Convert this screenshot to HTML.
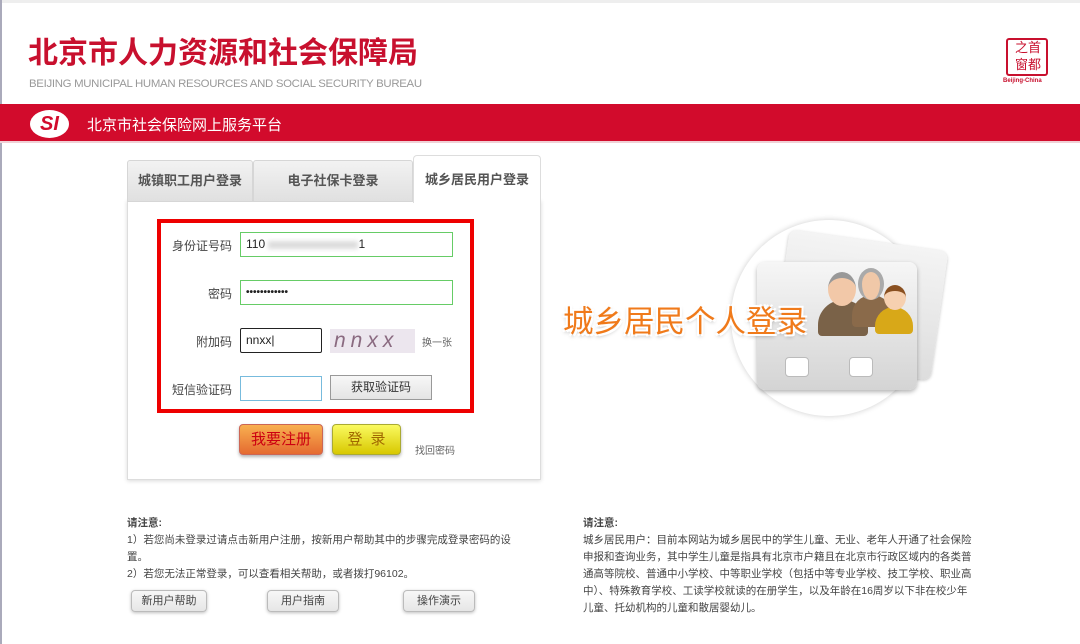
<!DOCTYPE html>
<html><head><meta charset="utf-8">
<style>
*{margin:0;padding:0;box-sizing:border-box}
body{width:1080px;height:644px;background:#fff;position:relative;overflow:hidden;font-family:"Liberation Sans","Noto Sans CJK SC",sans-serif;color:#333}
.a{position:absolute}
.lab{position:absolute;font-size:12px;color:#444;text-align:right;width:80px;left:152px}
.in{position:absolute;border:1px solid #6c6;background:#fff;font-size:12px;padding-left:5px;line-height:23px;color:#222}
.btn{position:absolute;border:1px solid #bbb;border-radius:4px;background:linear-gradient(#f7f7f7,#e6e6e6);font-size:11px;color:#444;text-align:center;box-shadow:0 1px 3px rgba(0,0,0,.25)}
.tab{position:absolute;top:160px;height:42px;background:linear-gradient(#f2f2f2,#e0e0e0);border:1px solid #d6d6d6;font-size:13px;font-weight:bold;color:#555;text-align:center;line-height:40px;border-radius:3px 3px 0 0}
.note{font-size:10.5px;color:#444;line-height:17px}
</style></head><body>
<div class="a" style="left:0;top:0;width:1080px;height:3px;background:#eee"></div>
<div class="a" style="left:0;top:0;width:2px;height:644px;background:#aab"></div>
<div class="a" style="left:28px;top:35px;font-size:30px;font-weight:bold;color:#c8102e;line-height:38px">北京市人力资源和社会保障局</div>
<div class="a" style="left:29px;top:78px;font-size:11.4px;color:#999;letter-spacing:-0.3px">BEIJING MUNICIPAL HUMAN RESOURCES AND SOCIAL SECURITY BUREAU</div>
<div class="a" style="left:1006px;top:38px;width:42px;height:38px;border:2px solid #c8102e;border-radius:3px"></div>
<div class="a" style="left:1008px;top:39px;font-size:13px;color:#c8102e;line-height:17px;width:40px;text-align:center">之首<br>窗都</div>
<div class="a" style="left:1003px;top:78px;font-size:6px;color:#c8102e;font-weight:bold">Beijing-China</div>
<div class="a" style="left:0;top:104px;width:1080px;height:37px;background:#d20b2c"></div>
<div class="a" style="left:0;top:141px;width:1080px;height:2px;background:#f0d0d5"></div>
<div class="a" style="left:30px;top:110px;width:39px;height:28px;border-radius:50%;background:#fff;color:#d20b2c;font-weight:bold;font-size:20px;text-align:center;line-height:28px;font-style:italic">SI</div>
<div class="a" style="left:87px;top:114px;font-size:15px;color:#fff">北京市社会保险网上服务平台</div>

<div class="a" style="left:127px;top:200px;width:414px;height:280px;border:1px solid #ddd;border-top:none;box-shadow:0 1px 4px rgba(0,0,0,.15)"></div>
<div class="tab" style="left:127px;width:126px">城镇职工用户登录</div>
<div class="tab" style="left:253px;width:160px">电子社保卡登录</div>
<div class="a" style="left:413px;top:155px;width:128px;height:48px;background:#fff;border:1px solid #ddd;border-bottom:none;border-radius:4px 4px 0 0;font-size:13px;font-weight:bold;color:#555;text-align:center;line-height:48px">城乡居民用户登录</div>

<div class="a" style="left:157px;top:219px;width:317px;height:194px;border:4px solid #e00"></div>
<div class="lab" style="top:237px">身份证号码</div>
<div class="in" style="left:240px;top:232px;width:213px;height:25px">110 <span style="display:inline-block;width:90px;height:8px;background:#ddd;filter:blur(2px);vertical-align:middle"></span>1</div>
<div class="lab" style="top:285px">密码</div>
<div class="in" style="left:240px;top:280px;width:213px;height:25px;font-size:10px;font-weight:bold">••••••••••••</div>
<div class="lab" style="top:333px">附加码</div>
<div class="in" style="left:240px;top:328px;width:82px;height:25px;border:1.5px solid #222;border-radius:2px">nnxx|</div>
<div class="a" style="left:330px;top:329px;width:85px;height:24px;background:#ece6ee;font-size:21px;color:#8a6a80;font-style:italic;letter-spacing:5px;line-height:24px;padding-left:4px">nnxx</div>
<div class="a" style="left:422px;top:334px;font-size:10px;color:#666">换一张</div>
<div class="lab" style="top:381px">短信验证码</div>
<div class="in" style="left:240px;top:376px;width:82px;height:25px;border-color:#7bd"></div>
<div class="a" style="left:330px;top:375px;width:102px;height:25px;border:1px solid #999;background:linear-gradient(#f7f7f7,#e4e4e4);font-size:12px;text-align:center;line-height:23px;color:#333">获取验证码</div>
<div class="a" style="left:239px;top:424px;width:84px;height:31px;border:1px solid #c65;border-radius:4px;background:linear-gradient(#f8b050,#e56a30);color:#c01;font-size:15px;text-align:center;line-height:29px;box-shadow:0 2px 3px rgba(0,0,0,.3)">我要注册</div>
<div class="a" style="left:332px;top:424px;width:69px;height:31px;border:1px solid #aa3;border-radius:4px;background:linear-gradient(#fafa60,#d8c800);color:#a06800;font-size:15px;text-align:center;line-height:29px;letter-spacing:8px;padding-left:8px;box-shadow:0 2px 3px rgba(0,0,0,.3)">登录</div>
<div class="a" style="left:415px;top:442px;font-size:10px;color:#666">找回密码</div>

<div class="a" style="left:731px;top:220px;width:196px;height:196px;border-radius:50%;background:#fff;box-shadow:0 0 6px rgba(0,0,0,.2)"></div>
<div class="a" style="left:780px;top:240px;width:160px;height:130px;border-radius:8px;background:linear-gradient(#f4f4f4,#ddd);transform:rotate(8deg);box-shadow:0 1px 3px rgba(0,0,0,.25)"></div>
<div class="a" style="left:757px;top:262px;width:160px;height:128px;border-radius:8px;background:linear-gradient(#f6f6f6,#d4d4d4);box-shadow:0 2px 5px rgba(0,0,0,.3)"></div>
<div class="a" style="left:785px;top:357px;width:24px;height:20px;border-radius:4px;background:#fff;border:1px solid #bbb"></div>
<div class="a" style="left:849px;top:357px;width:24px;height:20px;border-radius:4px;background:#fff;border:1px solid #bbb"></div>
<div class="a" style="left:818px;top:300px;width:50px;height:36px;border-radius:25px 25px 4px 4px;background:#7a6248"></div>
<div class="a" style="left:828px;top:272px;width:28px;height:34px;border-radius:50%;background:#f2c8a8;border-top:6px solid #999"></div>
<div class="a" style="left:852px;top:295px;width:40px;height:32px;border-radius:20px 20px 4px 4px;background:#8a6a4a"></div>
<div class="a" style="left:858px;top:268px;width:26px;height:32px;border-radius:50%;background:#f0c8a8;border:4px solid #aaa;border-bottom:none"></div>
<div class="a" style="left:875px;top:307px;width:38px;height:27px;border-radius:19px 19px 4px 4px;background:#d8a818"></div>
<div class="a" style="left:884px;top:285px;width:22px;height:25px;border-radius:50%;background:#f6d0b0;border-top:6px solid #8a5020"></div>
<div class="a" style="left:563px;top:302px;font-size:30.5px;color:#f07a1a;text-shadow:-2px -2px 0 #fff,2px -2px 0 #fff,-2px 2px 0 #fff,2px 2px 0 #fff,0 2px 4px rgba(0,0,0,.4);line-height:40px">城乡居民个人登录</div>

<div class="a note" style="left:127px;top:515px;width:400px">
<b>请注意:</b><br>1）若您尚未登录过请点击新用户注册，按新用户帮助其中的步骤完成登录密码的设置。<br>2）若您无法正常登录，可以查看相关帮助，或者拨打96102。</div>
<div class="btn" style="left:131px;top:590px;width:76px;height:22px;line-height:20px">新用户帮助</div>
<div class="btn" style="left:267px;top:590px;width:72px;height:22px;line-height:20px">用户指南</div>
<div class="btn" style="left:403px;top:590px;width:72px;height:22px;line-height:20px">操作演示</div>
<div class="a note" style="left:583px;top:515px;width:390px">
<b>请注意:</b><br>城乡居民用户：目前本网站为城乡居民中的学生儿童、无业、老年人开通了社会保险申报和查询业务，其中学生儿童是指具有北京市户籍且在北京市行政区域内的各类普通高等院校、普通中小学校、中等职业学校（包括中等专业学校、技工学校、职业高中）、特殊教育学校、工读学校就读的在册学生，以及年龄在16周岁以下非在校少年儿童、托幼机构的儿童和散居婴幼儿。</div>
</body></html>
